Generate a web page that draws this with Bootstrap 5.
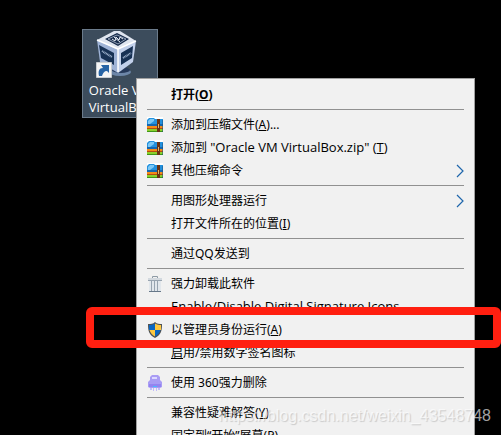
<!DOCTYPE html>
<html lang="zh-CN">
<head>
<meta charset="utf-8">
<meta name="viewport" content="width=device-width, initial-scale=1">
<title>VirtualBox</title>
<link href="https://cdn.jsdelivr.net/npm/bootstrap@5.3.0/dist/css/bootstrap.min.css" rel="stylesheet">
<style>
body { background: #000; font-family: "Noto Sans", "Noto Sans CJK SC", sans-serif; font-size: 12px; }
.desktop { padding: 29px 0 0 82px; }
.shortcut { width: 76px; height: 89px; background: #3c4c5c; border: 1px solid #6b7b8b; color: #fff; line-height: 17px; }
.shortcut svg { width: 48px; height: 48px; margin-bottom: 4px; }
.latin { font-family: "Open Sans", sans-serif; font-size: 13px; }
.context-menu { top: 78px; left: 136px; right: 26px; background: #f1f1f1; border: 1px solid #a0a0a0; font-size: 12px; --bs-dropdown-padding-x: 0; --bs-dropdown-padding-y: 4px; }
.context-menu .dropdown-item { height: 23px; padding: 0 10px; color: #000; line-height: 23px; }
.context-menu .dropdown-item:hover { background: #fff; }
.context-menu .dropdown-divider { margin: 3px 10px; border-top: 1px solid #919191; opacity: 1; }
.glyph { width: 16px; height: 16px; flex: none; margin-right: 8px; }
.arrow { width: 8px; height: 14px; }
.highlight { top: 307px; left: 86px; right: 0; height: 41px; border: 8px solid #ff1f10; border-radius: 6px; z-index: 1010; }
.watermark { right: 10px; bottom: 9px; font: 16px/20px "Liberation Sans", sans-serif; color: rgba(255,255,255,.65); text-shadow: 1px 1px 1px rgba(0,0,0,.16); z-index: 1020; }
</style>
</head>
<body class="position-relative vh-100 overflow-hidden">
<svg class="d-none" aria-hidden="true">
  <symbol id="zip" viewBox="0 0 16 16">
    <path d="M0 0h16v15H0z" fill="#fff"/>
    <path d="M0 3l2-2h5l1 1h8v6H0z" fill="#2491dd"/><path d="M1 4l2-2h4v2l-4 3H1z" fill="#7cc8f5"/>
    <path d="M0 7h16v2H0z" fill="#1467b0"/><path d="M0 9h16v3H0z" fill="#f58a18"/><path d="M0 11h16v1H0z" fill="#b64b10"/>
    <path d="M0 12h16v2H0z" fill="#8ad02c"/><path d="M0 14h16v1H0z" fill="#3f961a"/>
    <path d="M10 2h3v13h-3z" fill="#6b3212"/><path d="M11 7h1v4h-1z" fill="#e0b46a"/><path d="M15 3h1v12h-1z" fill="#17507e" opacity=".5"/>
  </symbol>
  <symbol id="chevron" viewBox="0 0 8 14"><path d="M1 1l6 6-6 6" fill="none" stroke="#1e66ac" stroke-width="1.2"/></symbol>
</svg>
<main class="desktop">
  <a href="#" class="shortcut d-flex flex-column align-items-center text-center text-decoration-none overflow-hidden">
    <svg class="flex-shrink-0" viewBox="0 0 48 48" aria-hidden="true">
      <ellipse cx="24" cy="42" rx="11" ry="4" fill="#6d86a8"/><ellipse cx="25" cy="40" rx="9" ry="3" fill="#26395a"/>
      <path d="M1 10L22 19V43L4 32z" fill="#9fb3d6"/><path d="M22 19L40 11 37 32 22 43z" fill="#c2d0ea"/>
      <path d="M1 10L18 1h6l16 10-18 9z" fill="#dfe5ef"/>
      <path d="M9 9L21 3l12 6-11 7z" fill="#172b4a"/><path d="M12 9l9-4 9 4-8 5z" fill="none" stroke="#aebcd0" stroke-width=".8"/>
      <path d="M16 9l3 2 1-4 3 3 1-3 3 2M18 7l6 5" fill="none" stroke="#e6ecf5"/>
      <path d="M3 15l15 8v12L5 28zM25 23l12-7-1 12-11 7z" fill="#173154"/>
      <path d="M6 21l10 6M27 28l8-5" stroke="#9cb0cb" stroke-width="2" stroke-dasharray="1 .5"/>
      <path d="M1 10L22 19 40 11M22 19v23" fill="none" stroke="#fff" stroke-width="1.500"/>
      <path d="M.5 32.500h15v15H.5z" fill="#f5f5f5" stroke="#c9cdd1"/>
      <path d="M3 46c-1-5 0-8 4-8l-2-3h8v8l-2-2c-3 0-4 2-5 5z" fill="#2864a5"/>
    </svg>
    <span class="latin">Oracle VM<br>VirtualBox</span>
  </a>
</main>
<ul class="context-menu dropdown-menu show rounded-0">
  <li><button class="dropdown-item d-flex align-items-center fw-bold" type="button"><i class="glyph"></i><span>打开(<u>O</u>)</span></button></li>
  <li><hr class="dropdown-divider"></li>
  <li><button class="dropdown-item d-flex align-items-center" type="button"><svg class="glyph" aria-hidden="true"><use href="#zip"/></svg><span>添加到压缩文件(<u>A</u>)...</span></button></li>
  <li><button class="dropdown-item d-flex align-items-center" type="button"><svg class="glyph" aria-hidden="true"><use href="#zip"/></svg><span>添加到 <span class="latin">"Oracle VM VirtualBox.zip" (<u>T</u>)</span></span></button></li>
  <li><button class="dropdown-item d-flex align-items-center" type="button"><svg class="glyph" aria-hidden="true"><use href="#zip"/></svg><span>其他压缩命令</span><svg class="arrow ms-auto" aria-hidden="true"><use href="#chevron"/></svg></button></li>
  <li><hr class="dropdown-divider"></li>
  <li><button class="dropdown-item d-flex align-items-center" type="button"><i class="glyph"></i><span>用图形处理器运行</span><svg class="arrow ms-auto" aria-hidden="true"><use href="#chevron"/></svg></button></li>
  <li><button class="dropdown-item d-flex align-items-center" type="button"><i class="glyph"></i><span>打开文件所在的位置(<u>I</u>)</span></button></li>
  <li><hr class="dropdown-divider"></li>
  <li><button class="dropdown-item d-flex align-items-center" type="button"><i class="glyph"></i><span>通过QQ发送到</span></button></li>
  <li><hr class="dropdown-divider"></li>
  <li><button class="dropdown-item d-flex align-items-center" type="button"><svg class="glyph" viewBox="0 0 16 16" aria-hidden="true"><path d="M5.500 2V.5h5V2" fill="none" stroke="#8d9aa5"/><path d="M1 2h14v3H1z" fill="#d3d9df"/><path d="M1 4h14v1H1z" fill="#98a4b0"/><path d="M2 5h12v11H2z" fill="#e2e7ec"/><path d="M4.500 5v10M7.500 5v10M10.500 5v10" stroke="#98a4b0"/><path d="M2 15h12v1H2z" fill="#667789"/></svg><span>强力卸载此软件</span></button></li>
  <li><button class="dropdown-item d-flex align-items-center" type="button"><i class="glyph"></i><span class="latin">Enable/Disable Digital Signature Icons</span></button></li>
  <li><button class="dropdown-item d-flex align-items-center" type="button"><svg class="glyph" viewBox="0 0 16 16" aria-hidden="true"><path d="M8 0c2 2 4 2 7 2 0 7-1 11-7 14C2 13 1 9 1 2c3 0 5 0 7-2z" fill="#4d5254"/><path d="M8 1.500V8H2V3c2 0 4 0 6-1.500zM8 8h5.500c-1 3-2.500 5-5.500 6.500z" fill="#0b67c2"/><path d="M8 1.500C10 3 12 3 14 3v5H8zM8 8v6.500C5 13 3.500 11 2.500 8z" fill="#ffc83f"/></svg><span>以管理员身份运行(<u>A</u>)</span></button></li>
  <li><button class="dropdown-item d-flex align-items-center" type="button"><i class="glyph"></i><span><u>启</u>用/禁用数字签名图标</span></button></li>
  <li><hr class="dropdown-divider"></li>
  <li><button class="dropdown-item d-flex align-items-center" type="button"><svg class="glyph" viewBox="0 0 16 16" aria-hidden="true"><path d="M5 0h6l2 2v3l2 2v5l-2 1H3l-2-1V7l2-2V2z" fill="#a99cf4"/><path d="M5 2h5v2H5z" fill="#dcd8ff"/><path d="M2 9h12v3H2z" fill="#9384f0"/><path d="M6 11h4v1H6z" fill="#43b9ff"/><path d="M3 13h2v2H3zM6 13h1v3H6zM9 13h1v3H9zM11 13h2v2h-2z" fill="#c2bbfa"/></svg><span>使用 360强力删除</span></button></li>
  <li><hr class="dropdown-divider"></li>
  <li><button class="dropdown-item d-flex align-items-center" type="button"><i class="glyph"></i><span>兼容性疑难解答(<u>Y</u>)</span></button></li>
  <li><button class="dropdown-item d-flex align-items-center" type="button"><i class="glyph"></i><span>固定到“开始”屏幕(<u>P</u>)</span></button></li>
</ul>
<div class="highlight position-absolute pe-none"></div>
<div class="watermark position-absolute pe-none">https://blog.csdn.net/weixin_43548748</div>
<script src="https://cdn.jsdelivr.net/npm/bootstrap@5.3.0/dist/js/bootstrap.bundle.min.js"></script>
</body>
</html>
